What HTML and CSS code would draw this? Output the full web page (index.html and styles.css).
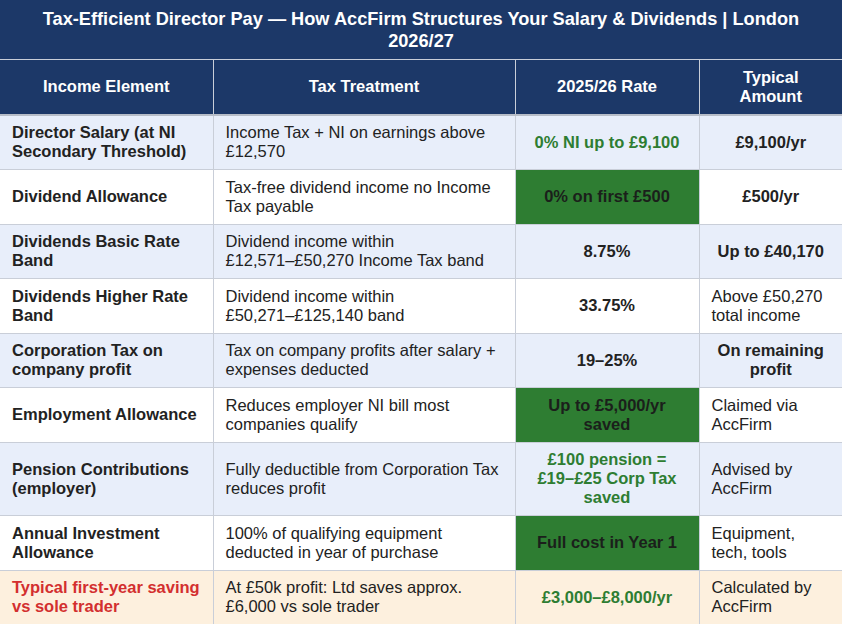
FILE: index.html
```html
<!DOCTYPE html>
<html lang="en">
<head>
<meta charset="utf-8">
<title>Tax-Efficient Director Pay</title>
<link rel="stylesheet" href="styles.css">
</head>
<body>
<table class="pay-table">
  <colgroup>
    <col class="c1">
    <col class="c2">
    <col class="c3">
    <col class="c4">
  </colgroup>
  <thead>
    <tr>
      <th class="title" colspan="4">Tax-Efficient Director Pay — How AccFirm Structures Your Salary &amp; Dividends | London 2026/27</th>
    </tr>
    <tr class="head">
      <th>Income Element</th>
      <th>Tax Treatment</th>
      <th>2025/26 Rate</th>
      <th>Typical Amount</th>
    </tr>
  </thead>
  <tbody>
    <tr class="alt">
      <td class="el">Director Salary (at NI Secondary Threshold)</td>
      <td>Income Tax + NI on earnings above £12,570</td>
      <td class="rate green-text">0% NI up to £9,100</td>
      <td class="amt strong">£9,100/yr</td>
    </tr>
    <tr>
      <td class="el">Dividend Allowance</td>
      <td>Tax-free dividend income no Income Tax payable</td>
      <td class="rate green-cell">0% on first £500</td>
      <td class="amt strong">£500/yr</td>
    </tr>
    <tr class="alt">
      <td class="el">Dividends Basic Rate Band</td>
      <td>Dividend income within <span class="nb">£12,571–£50,270</span> Income Tax band</td>
      <td class="rate">8.75%</td>
      <td class="amt strong">Up to £40,170</td>
    </tr>
    <tr>
      <td class="el">Dividends Higher Rate Band</td>
      <td>Dividend income within <span class="nb">£50,271–£125,140</span> band</td>
      <td class="rate">33.75%</td>
      <td class="amt">Above £50,270 total income</td>
    </tr>
    <tr class="alt">
      <td class="el">Corporation Tax on company profit</td>
      <td>Tax on company profits after salary + expenses deducted</td>
      <td class="rate">19–25%</td>
      <td class="amt strong">On remaining profit</td>
    </tr>
    <tr>
      <td class="el">Employment Allowance</td>
      <td>Reduces employer NI bill most companies qualify</td>
      <td class="rate green-cell">Up to £5,000/yr saved</td>
      <td class="amt">Claimed via AccFirm</td>
    </tr>
    <tr class="alt">
      <td class="el">Pension Contributions (employer)</td>
      <td>Fully deductible from Corporation Tax reduces profit</td>
      <td class="rate green-text">£100 pension = £19–£25 Corp Tax saved</td>
      <td class="amt">Advised by AccFirm</td>
    </tr>
    <tr>
      <td class="el">Annual Investment Allowance</td>
      <td>100% of qualifying equipment deducted in year of purchase</td>
      <td class="rate green-cell">Full cost in Year 1</td>
      <td class="amt">Equipment, tech, tools</td>
    </tr>
    <tr class="highlight">
      <td class="el red-text">Typical first-year saving vs sole trader</td>
      <td>At £50k profit: Ltd saves approx. £6,000 vs sole trader</td>
      <td class="rate green-text">£3,000–£8,000/yr</td>
      <td class="amt">Calculated by AccFirm</td>
    </tr>
  </tbody>
</table>
</body>
</html>
```

FILE: styles.css
```css
html, body {
  margin: 0;
  padding: 0;
  background: #ffffff;
}

body {
  font-family: "Liberation Sans", Arial, sans-serif;
  color: #222222;
}

.pay-table {
  width: 842px;
  border-collapse: collapse;
  table-layout: fixed;
  font-size: 16.5px;
  line-height: 19px;
}

.c1 { width: 213px; }
.c2 { width: 302px; }
.c3 { width: 184px; }
.c4 { width: 143px; }

.pay-table th,
.pay-table td {
  border: 1px solid #c9ced8;
  padding: 7.75px 12px;
  vertical-align: middle;
}

.pay-table .title {
  background: #1c3868;
  color: #ffffff;
  font-size: 18.2px;
  line-height: 22px;
  font-weight: bold;
  text-align: center;
  padding: 7.5px 20px;
  border-top: none;
  border-left: none;
  border-right: none;
}

.head th {
  background: #1c3868;
  color: #ffffff;
  font-weight: bold;
  text-align: center;
  height: 38px;
  border-bottom: 2px solid #b7bdc8;
}

.head th:first-child { border-left: none; }
.head th:last-child { border-right: none; }

tbody td:first-child { border-left: none; }
tbody td:last-child { border-right: none; }

tbody tr { background: #ffffff; }
tbody tr.alt { background: #e8eefa; }
tbody tr.highlight { background: #fdf0de; }

.nb { white-space: nowrap; }

.el {
  font-weight: bold;
  color: #222222;
}

.rate {
  text-align: center;
  font-weight: bold;
  color: #222222;
}

.amt {
  color: #222222;
}

.amt.strong {
  font-weight: bold;
  text-align: center;
}

.green-text {
  color: #2e7d32;
}

.green-cell {
  background: #2e7d32;
  color: #1b1f1b;
}

.red-text {
  color: #d32f2f;
}
```
